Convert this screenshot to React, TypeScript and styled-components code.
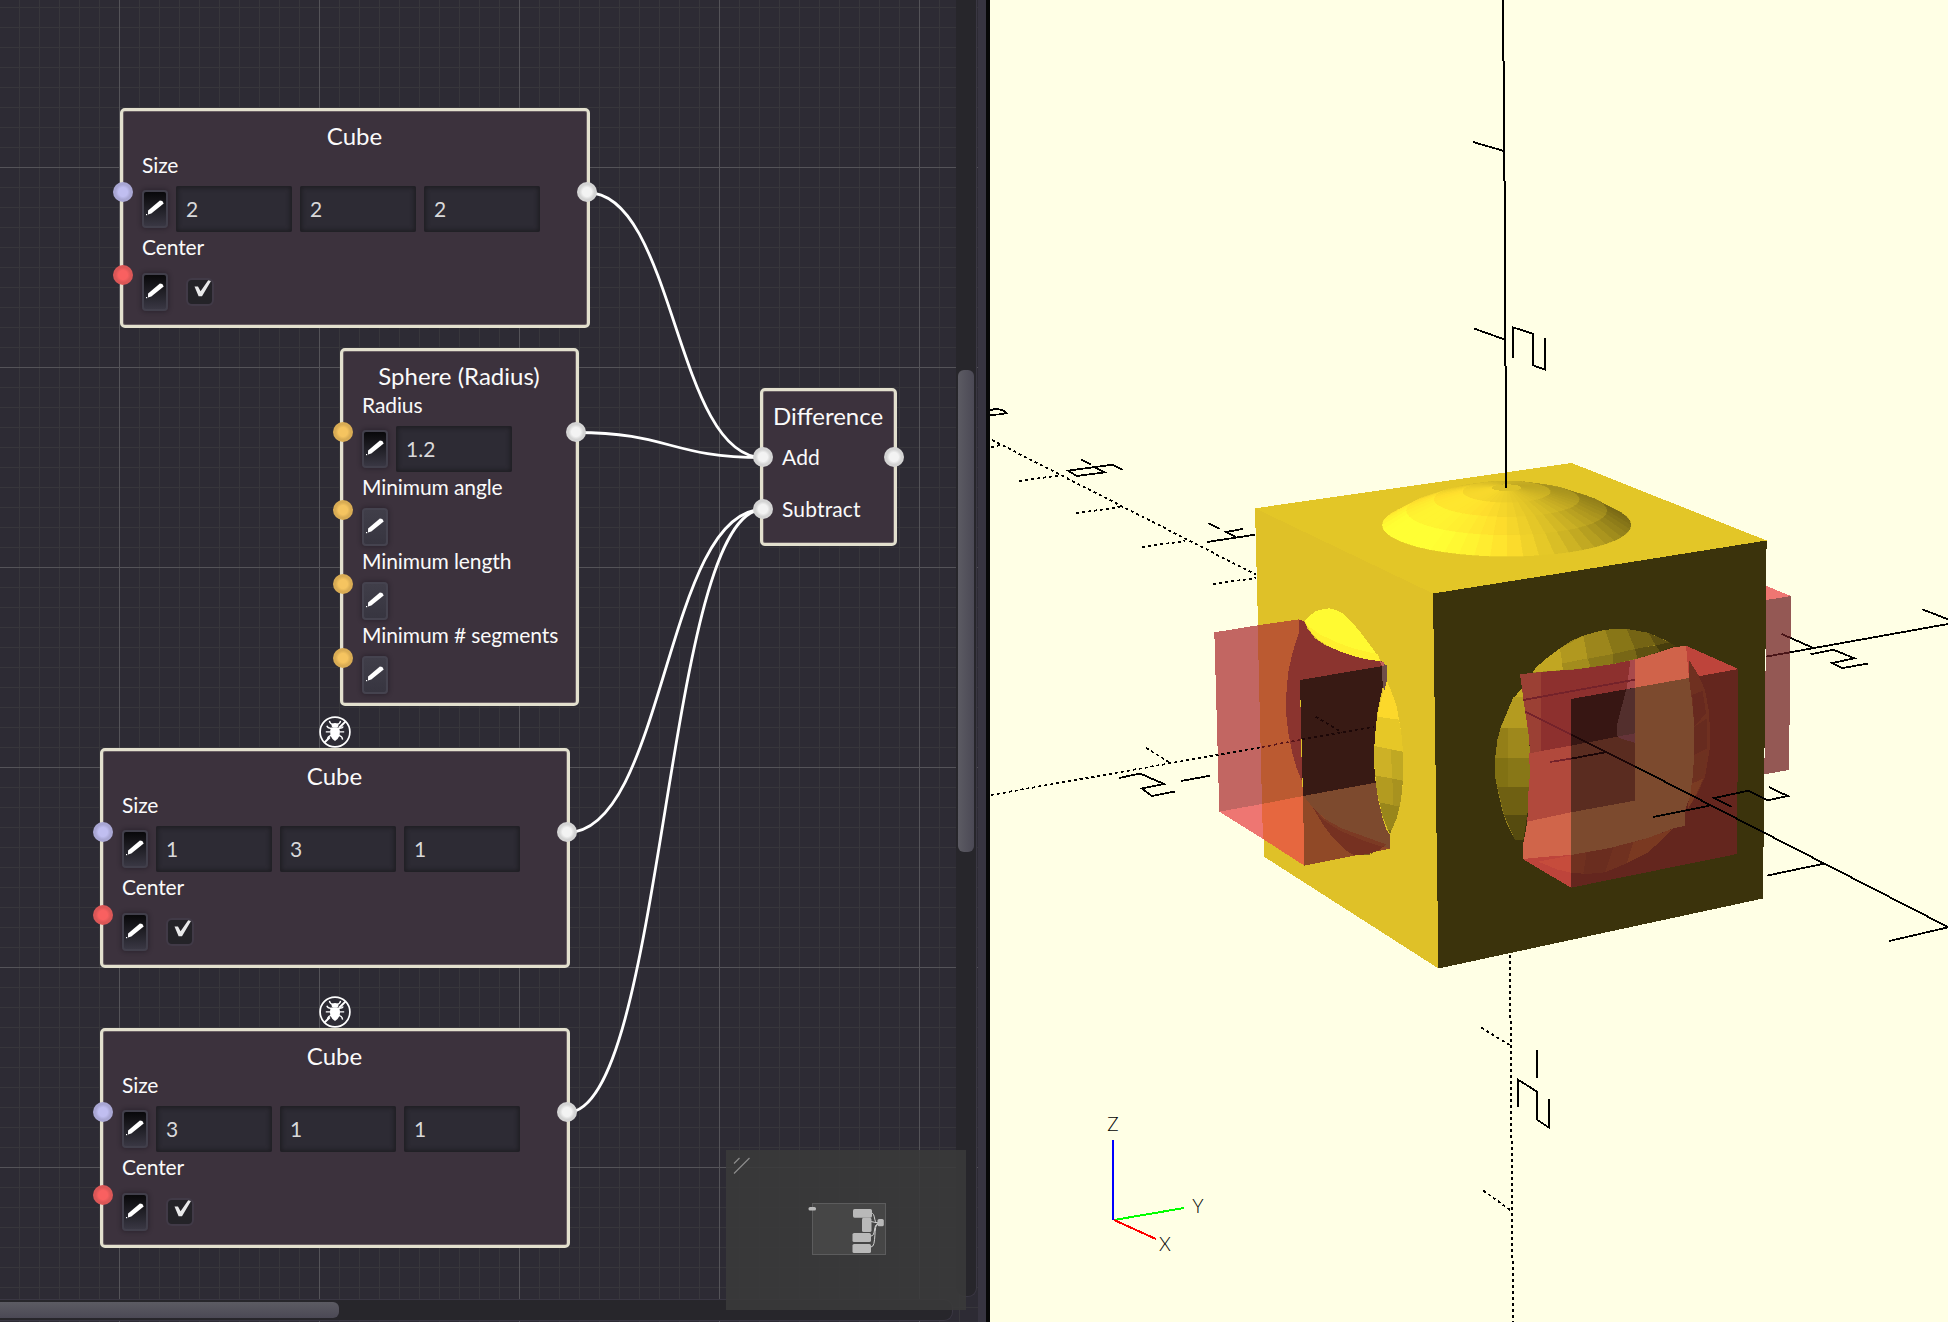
import React from 'react';
import styled, { createGlobalStyle } from 'styled-components';

const GlobalStyle = createGlobalStyle`
  html, body { margin: 0; padding: 0; background: #2d2b34; overflow: hidden; }
  *, *::before, *::after { box-sizing: border-box; }
`;

const Window = styled.div`
  display: flex;
  width: 1948px;
  height: 1322px;
  overflow: hidden;
  font-family: Lato, 'Open Sans', sans-serif;
`;

const GraphPanel = styled.section`
  position: relative;
  flex: 0 0 978px;
  overflow: hidden;
  background-color: #2d2b34;
  background-image:
    linear-gradient(to right, #545358 1px, transparent 1px),
    linear-gradient(to bottom, #545358 1px, transparent 1px),
    linear-gradient(to right, #37363b 1px, transparent 1px),
    linear-gradient(to bottom, #37363b 1px, transparent 1px);
  background-size: 200px 200px, 200px 200px, 20px 20px, 20px 20px;
  background-position: 119px 0, 0 167px, 19px 0, 0 7px;
`;

const Splitter = styled.div`
  flex: 0 0 12px;
  background: #373440;
  border-right: 4px solid #070707;
`;

const Viewport = styled.section`
  flex: 1;
  background: #ffffe5;
`;

const Scene = styled.svg`
  display: block;
  width: 958px;
  height: 1322px;
`;

const Wires = styled.svg`
  position: absolute;
  inset: 0;
  width: 978px;
  height: 1322px;
`;

/* ---------- graph nodes ---------- */

const NodeBox = styled.article<{ $x: number; $y: number; $w: number }>`
  position: absolute;
  left: ${(p) => p.$x}px;
  top: ${(p) => p.$y}px;
  width: ${(p) => p.$w}px;
  padding-bottom: 9px;
  border: 3px solid #e3e0ce;
  border-radius: 5px;
  background: #3c323d;
  box-shadow: inset 0 0 0 1px #6a5f65;
  color: #fafafa;
`;

const Title = styled.h2`
  margin: 0;
  height: 39px;
  padding: 10px 1px 0 0;
  font-size: 24px;
  font-weight: 400;
  line-height: 29px;
  text-align: center;
  white-space: nowrap;
`;

const Row = styled.div`
  position: relative;
  padding-left: 19px;
`;

const Label = styled.div`
  height: 36px;
  line-height: 29px;
  font-size: 21px;
  letter-spacing: -0.1px;
  white-space: nowrap;
`;

const SlotLabel = styled.div`
  line-height: 53px;
  height: 52px;
  font-size: 21px;
  letter-spacing: 0.15px;
`;

const Controls = styled.div<{ $h: number }>`
  display: flex;
  align-items: center;
  gap: 8px;
  height: ${(p) => p.$h}px;
`;

const portColors = {
  vector: ['#c0bef0', '#a9a7d4'],
  bool: ['#f96060', '#db5757'],
  number: ['#f5c460', '#d9ac54'],
  solid: ['#f3f3f3', '#d4d4d4'],
};
type PortKind = keyof typeof portColors;

const Port = styled.span<{ $kind: PortKind; $side: 'left' | 'right' }>`
  position: absolute;
  top: 50%;
  ${(p) => p.$side}: -10px;
  width: 20px;
  height: 20px;
  margin-top: -9px;
  border-radius: 50%;
  background: radial-gradient(
    circle closest-side,
    ${(p) => portColors[p.$kind][0]} 45%,
    ${(p) => portColors[p.$kind][1]} 75%
  );
  z-index: 2;
`;

const EditButton = styled.button<{ $on: boolean }>`
  display: flex;
  width: 26px;
  height: 38px;
  padding: 0;
  border: 2px solid ${(p) => (p.$on ? '#413f4b' : '#45434f')};
  border-radius: 4px;
  background: ${(p) => (p.$on ? 'linear-gradient(#08080a, #393743)' : 'linear-gradient(#403e49, #373540)')};
  box-shadow: 0 0 4px 1px rgba(24, 20, 28, 0.45);
`;

const Field = styled.div`
  width: 116px;
  height: 46px;
  padding-left: 10px;
  border-radius: 2px;
  background: #2d2b34;
  box-shadow: inset 0 0 4px 2px #1f1e23;
  color: #d9d9da;
  font-size: 21px;
  line-height: 45px;
`;

const Check = styled.div`
  display: flex;
  width: 24px;
  height: 24px;
  margin-left: 12px;
  border-radius: 4px;
  background: #242328;
  box-shadow: 0 0 0 2px #413a47;
`;

const Glyph = styled.svg`
  display: block;
  flex: none;
  overflow: visible;
`;

const BugBadge = styled.div<{ $x: number; $y: number }>`
  position: absolute;
  left: ${(p) => p.$x}px;
  top: ${(p) => p.$y}px;
`;

const Edit = ({ on = false }: { on?: boolean }) => (
  <EditButton $on={on}>
    <Glyph width="22" height="34" viewBox="2 2 22 34">
      <path d="M6.4 19.6 18.2 9.4 20.6 10 22 12.6 9.6 22.4 6.3 23.4Z" fill="#fff" transform="translate(-.3 1)" />
      <rect x="4" y="24" width="1.2" height="1.2" fill="#fff" />
    </Glyph>
  </EditButton>
);

const Checkbox = () => (
  <Check>
    <Glyph width="24" height="24" viewBox="0 0 24 24">
      <path d="M6.5 6.5H10L12.6 11.2 20.2.2 23 1 14 16.2H10.6Z" fill="#e9e9ea" />
    </Glyph>
  </Check>
);

const Bug = ({ x, y }: { x: number; y: number }) => (
  <BugBadge $x={x} $y={y}>
    <Glyph width="32" height="32" viewBox="0 0 32 32" fill="none" stroke="#fff">
      <circle cx="16" cy="16" r="14.9" strokeWidth="1.7" fill="#2d2b34" />
      <path d="M26.4 5.6 20.2 11.8M10.8 21.2 5.4 26.6" strokeWidth="2" />
      <path
        d="M10.4 4.8Q11 8 14 8.4M21.6 4.8Q21 8 18 8.4M12 12.4Q8.6 12.4 7.8 9.8M11.6 15.8H6.8M12 19.4Q8.6 20.4 8.4 23.6M20 12.4Q23.4 12.4 24.2 10.6M20.4 15.8H25.2M20 19.4Q23.4 20.4 23.6 23.6"
        strokeWidth="1.3"
      />
      <ellipse cx="16" cy="9.4" rx="3.4" ry="2.4" fill="#fff" stroke="none" />
      <path d="M12 11.6H20Q21.6 15 20.6 19.6 19 23.6 16 25 13 23.6 11.4 19.6 10.4 15 12 11.6Z" fill="#fff" stroke="none" />
    </Glyph>
  </BugBadge>
);

const CubeNode = ({ x, y, size }: { x: number; y: number; size: string[] }) => (
  <NodeBox $x={x} $y={y} $w={470}>
    <Title>Cube</Title>
    <Row>
      <Port $kind="vector" $side="left" />
      <Port $kind="solid" $side="right" />
      <Label>Size</Label>
      <Controls $h={46}>
        <Edit on />
        {size.map((v, i) => (
          <Field key={i}>{v}</Field>
        ))}
      </Controls>
    </Row>
    <Row>
      <Port $kind="bool" $side="left" />
      <Label>Center</Label>
      <Controls $h={48}>
        <Edit on />
        <Checkbox />
      </Controls>
    </Row>
  </NodeBox>
);

const SphereNode = ({ x, y }: { x: number; y: number }) => (
  <NodeBox $x={x} $y={y} $w={239}>
    <Title>Sphere (Radius)</Title>
    <Row>
      <Port $kind="number" $side="left" />
      <Port $kind="solid" $side="right" />
      <Label>Radius</Label>
      <Controls $h={46}>
        <Edit on />
        <Field>1.2</Field>
      </Controls>
    </Row>
    {['Minimum angle', 'Minimum length', 'Minimum # segments'].map((t) => (
      <Row key={t}>
        <Port $kind="number" $side="left" />
        <Label>{t}</Label>
        <Controls $h={38}>
          <Edit />
        </Controls>
      </Row>
    ))}
  </NodeBox>
);

const DifferenceNode = ({ x, y }: { x: number; y: number }) => (
  <NodeBox $x={x} $y={y} $w={137}>
    <Title>Difference</Title>
    <Row>
      <Port $kind="solid" $side="left" />
      <Port $kind="solid" $side="right" />
      <SlotLabel>Add</SlotLabel>
    </Row>
    <Row>
      <Port $kind="solid" $side="left" />
      <SlotLabel>Subtract</SlotLabel>
    </Row>
  </NodeBox>
);

const wires = [
  [587, 192.5, 763, 457.5],
  [576, 432.5, 763, 457.5],
  [567, 832.5, 763, 509.5],
  [567, 1112.5, 763, 509.5],
];

/* ---------- scroll bars and minimap ---------- */

const Track = styled.div<{ $vertical?: boolean }>`
  position: absolute;
  background: #27262b;
  border: 0 solid #3a3743;
  ${(p) =>
    p.$vertical
      ? 'left: 956px; top: -10px; width: 21px; height: 1307px; border-width: 0 1px 1px 0; border-radius: 0 0 9px 9px;'
      : 'left: -10px; top: 1299px; width: 963px; height: 22px; border-width: 1px 1px 1px 0; border-radius: 0 9px 9px 0;'}
`;

const Grabber = styled.div<{ $vertical?: boolean }>`
  position: absolute;
  border-radius: 6px;
  ${(p) =>
    p.$vertical
      ? 'left: 2px; top: 380px; width: 16px; height: 482px; background: linear-gradient(to right, #5c5b63, #4b4955);'
      : 'left: 0; top: 2px; width: 349px; height: 16px; background: linear-gradient(#5c5b63, #4b4955);'}
`;

const Minimap = styled.div`
  position: absolute;
  left: 726px;
  top: 1150px;
  width: 240px;
  height: 160px;
  background: rgba(58, 58, 58, 0.88);
`;

const MapNodes: number[][] = [
  [82.5, 57, 7.5, 3.5],
  [127, 59, 19, 8.7],
  [136, 67.8, 9.5, 14.3],
  [126.5, 83, 18.5, 9],
  [126.5, 94, 18.5, 9],
  [151.5, 69, 6.3, 7.3],
];

/* ---------- 3D view ---------- */

const shade = (b: number) =>
  `rgb(${Math.min(255, Math.round(227 * b))},${Math.min(255, Math.round(198 * b))},${Math.round(40 * b)})`;

// Latitude rings of the sphere cap: centre y, radii, light swing.
const rings = [
  { cy: 533, rx: 44, ry: 10, amp: 0.06 },
  { cy: 545, rx: 131, ry: 32, amp: 0.12 },
  { cy: 568, rx: 218, ry: 52, amp: 0.21 },
  { cy: 602, rx: 301, ry: 73, amp: 0.3 },
  { cy: 645, rx: 373, ry: 94, amp: 0.4 },
];
const SEG = 48;

const Dome = () => {
  const facets: React.ReactNode[] = [];
  for (let k = rings.length - 1; k > 0; k--) {
    const o = rings[k];
    const n = rings[k - 1];
    const order = Array.from({ length: SEG }, (_, i) => i).sort(
      (a, b) => Math.sin(((a + 0.5) / SEG) * 2 * Math.PI) - Math.sin(((b + 0.5) / SEG) * 2 * Math.PI),
    );
    for (const i of order) {
      const a = (i / SEG) * 2 * Math.PI;
      const b = ((i + 1) / SEG) * 2 * Math.PI;
      const pt = (r: typeof o, t: number) => `${(410 + r.rx * Math.cos(t)).toFixed(1)},${(r.cy + r.ry * Math.sin(t)).toFixed(1)}`;
      const light = 1 - o.amp * 0.22 + o.amp * Math.cos((a + b) / 2 - 2.57);
      facets.push(
        <polygon key={`${k}-${i}`} points={`${pt(o, a)} ${pt(o, b)} ${pt(n, b)} ${pt(n, a)}`} fill={shade(light)} stroke={shade(light)} />,
      );
    }
  }
  return (
    <g transform="translate(1370 310) scale(.33333)">
      {facets}
      <ellipse cx="410" cy="533" rx="44" ry="10" fill={shade(0.98)} />
    </g>
  );
};

const P = ({ d, f }: { d: string; f: string }) => <polygon points={d} fill={f} />;

const LeftHole = () => (
  <g transform="translate(1200 600) scale(.33333)">
    <P d="43,97 173,76 186,612 58,635" f="#c26662" />
    <P d="58,635 186,612 189,717" f="#ee7672" />
    <P d="173,76 297,58 297,97 300,400 306,545 310,588 186,612" f="#bb5a31" />
    <P d="186,612 310,588 313,797 189,717" f="#e6673f" />
    <P d="297,58 313,65 322,85 345,115 375,135 410,150 460,168 545,184 549,198 300,240 306,545 290,505 276,455 265,400 258,335 260,260 266,210 277,160 297,97" f="#8b342f" />
    <P d="314,64 325,50 345,35 362,29 388,25 405,29 425,38 450,60 480,95 505,128 525,155 541,184 500,178 460,168 420,154 385,139 350,116 328,90" f="#fffa32" />
    <P d="314,64 330,82 360,103 410,127 460,145 534,163 541,184 500,178 460,168 420,154 385,139 350,116 328,90" f="#fff02e" />
    <P d="560,240 569,262 580,290 590,320 597,358 604,400 609,455 609,545 603,600 598,625 590,655 570,702 560,680 545,640 537,605 530,570 526,530 522,500 522,450 527,390 534,340 550,270" f="#fcd82b" />
    <P d="530,350 597,359 604,400 609,455 522,438 526,390" f="#e6c727" />
    <P d="522,438 609,455 609,542 526,526 522,490" f="#cdb126" />
    <P d="573,449 609,455 609,542 576,536" f="#c0a823" />
    <P d="526,526 609,542 603,600 599,620 538,607 530,570" f="#b39b20" />
    <P d="577,536 609,542 603,600 599,620 580,616" f="#a8921f" />
    <P d="538,607 599,620 590,655 574,692 563,688 548,650" f="#99861b" />
    <P d="563,688 574,692 570,702" f="#7a6a17" />
    <P d="300,240 549,198 552,245 542,290 532,340 526,400 522,450 523,500 527,550 309,590" f="#381a14" />
    <P d="546,190 561,196 561,240 552,275 547,240" f="#704e49" />
    <P d="540,184 553,188 553,197 546,198" f="#c0605c" />
    <P d="309,588 527,548 535,600 548,655 560,690 570,704 570,746 313,797" f="#904927" />
    <P d="311,588 527,548 535,600 548,655 560,690 570,704 570,745 500,722 430,693 380,660 340,625" f="#7d4a2e" />
    <P d="340,625 370,655 420,688 500,721 553,738 535,752 500,764 460,764 435,750 400,715 370,675" f="#763121" />
    <P d="345,632 375,657 425,685 500,712 560,734 545,740 490,722 420,692 370,660" f="#7c3a24" />
    <P d="472,766 518,760 505,766" f="#7a5f20" />
  </g>
);

const FrontHole = () => (
  <g transform="translate(1460 580) scale(.33333)">
    <P d="919,18 993,48 919,60" f="#ee7672" />
    <P d="919,60 993,48 987,570 913,583" f="#945854" />
    {/* sphere shell seen through the opening */}
    <P d="465,147 500,147 565,158 625,185 645,197 600,215 525,238 460,252 350,268 240,277 180,283 200,360 210,520 205,640 190,780 165,780 142,735 127,690 115,640 106,595 106,530 112,480 123,440 140,400 160,355 185,325 218,277 260,235 300,205 335,182 370,167 430,150" f="#9c861c" />
    <P d="218,277 228,262 260,235 300,205 307,250 308,270" f="#c1a622" />
    <P d="300,205 370,167 383,235 307,250" f="#b1981f" />
    <P d="370,167 435,149 460,222 383,236" f="#9c861c" />
    <P d="435,149 500,147 525,207 460,222" f="#887617" />
    <P d="500,147 565,158 588,195 525,207" f="#756414" />
    <P d="565,158 628,187 588,198" f="#5f5111" />
    <P d="307,250 383,236 392,262 308,270" f="#a38c1d" />
    <P d="383,236 460,222 458,252 392,262" f="#8b7819" />
    <P d="460,222 525,207 532,236 458,252" f="#786716" />
    <P d="525,207 588,196 600,215 532,236" f="#5f5111" />
    <P d="588,196 628,187 645,197 600,215" f="#473d0c" />
    <P d="185,325 190,350 160,355" f="#c5a923" />
    <P d="160,352 192,352 202,443 123,443 140,400" f="#b49b20" />
    <P d="123,443 204,443 210,533 106,533" f="#9e881c" />
    <P d="106,533 212,533 209,621 112,621 106,595" f="#887717" />
    <P d="112,621 209,621 202,705 132,705" f="#6f6012" />
    <P d="132,705 202,705 190,780 165,780" f="#564b0f" />
    <P d="112,480 123,443 145,443 145,621 112,621 106,595 106,530" f="rgba(90,80,0,.14)" />
    {/* ghosted cube */}
    <P d="333,357 835,267 831,822 333,923" f="#64261e" />
    <P d="678,197 835,267 687,294" f="#be443b" />
    <P d="180,283 240,276 350,268 460,252 527,238 527,323 333,357 333,497 210,520 207,470 195,390" f="#8d302e" />
    <P d="180,283 243,276 243,514 210,520 207,470 195,390" f="#9b4034" />
    <P d="511,241 525,238 525,323 500,328" f="#a9494b" />
    <P d="333,357 525,323 525,460 333,497" f="#371613" />
    <P d="499,328 525,323 525,488 495,480 470,468 472,430 485,380" f="#532f2d" />
    <P d="333,497 525,460 525,662 333,697" f="#5a2c20" />
    <P d="470,470 525,460 525,488 495,480" f="#653439" />
    <P d="207,520 333,497 333,697 202,725 205,640 210,580" f="#b1493c" />
    <P d="202,725 333,697 333,825 260,830 188,837 190,790" f="#d0654a" />
    <P d="188,837 260,830 333,825 333,923" f="#be443b" />
    <P d="235,845 333,826 333,878 290,868" f="#c64c3c" />
    <P d="687,240 715,285 735,330 748,400 750,500 735,590 710,645 682,690 690,650 703,520 703,440 697,370 687,294" f="#6f3020" />
    <P d="697,345 728,332 738,400 703,440" f="#67291f" />
    <P d="703,440 742,415 742,505 703,525" f="#672b1f" />
    <P d="703,530 742,512 732,585 696,608" f="#6d3120" />
    <P d="694,612 730,595 710,640 682,690" f="#7a3b22" />
    <P d="525,238 570,225 640,202 678,197 687,294 525,323" f="#d0634a" />
    <P d="525,323 687,294 697,370 703,440 703,520 698,590 690,650 675,690 675,738 640,745 560,775 450,804 333,825 333,697 525,662" f="#7c4a2e" />
    <P d="333,825 450,804 560,775 640,746 600,785 560,820 500,850 435,877 380,882 333,878" f="#703120" />
    <P d="380,817 460,802 435,877 380,882 370,880" f="#6a2d1f" />
    <P d="520,787 560,775 640,746 600,785 560,820 500,850" f="#7a3921" />
  </g>
);

const Lines = ({ children, at = '0 0', color = '#000' }: { children: React.ReactNode; at?: string; color?: string }) => (
  <g transform={`translate(${at}) scale(.33333)`} fill="none" stroke={color} strokeWidth="5.4">
    {children}
  </g>
);

const DOT = '9 9';

const ModelView = () => (
  <Scene viewBox="990 0 958 1322" shapeRendering="crispEdges">
    <rect x="990" width="958" height="1322" fill="#ffffe5" />
    <P d="1255,508.3 1571.7,463 1766.6,540.5 1433,593.5" f="#e3c627" />
    <P d="1255,508.3 1433,593.5 1438.5,968.5 1264,856.7" f="#dfc128" />
    <P d="1433,593.5 1766.6,540.5 1763,898.5 1438.5,968.5" f="#3b330c" />
    <Dome />
    <LeftHole />
    <FrontHole />

    {/* vertical axis */}
    <g fill="none" stroke="#000" strokeWidth="2">
      <path d="M1503 0 1504 120 1505 240 1506 488" />
      <path d="M1473 142 1504 151" strokeWidth="1.8" />
      <path d="M1510 955 1513 1322" strokeDasharray="3 3" />
    </g>
    <Lines at="1370 310">
      <path d="M313 56 403 88M429 143V52L488 71 489 166 526 179 525 85" />
    </Lines>
    <Lines at="1080 1000">
      <path d="M1204 83 1290 136M1210 572 1292 631" strokeDasharray={DOT} />
      <path d="M1314 320V239L1371 275V359L1407 383V298M1371 151V233" />
    </Lines>

    {/* far half of the X axis */}
    <Lines at="980 380">
      <path d="M30 91Q45 85 60 89 76 93 79 99L60 103 30 105" />
      <path d="M36 180 240 284 828 584M33 202 60 195M117 303 240 286M288 400 420 381M486 501 615 483M699 612 828 594" strokeDasharray={DOT} />
      <path d="M303 239 333 254M428 270 398 254 264 272 290 288 375 277 345 262M685 429 719 447M788 447 738 456 768 471M681 486 826 464" />
    </Lines>

    {/* Y axis, left half */}
    <g fill="none" stroke="#000" strokeWidth="1.8">
      <path d="M991 795 1262 747" strokeDasharray="3 3" />
      <path d="M1146 748 1169 762" strokeDasharray="3 3" />
      <path d="M1181 781 1210 775.7M1119 778 1140 773.5 1164 784 1142 788.5 1152 796 1175 791.5" />
    </g>
    <Lines at="1200 600" color="#5a1519">
      <path d="M186 441 300 420" strokeDasharray={DOT} />
    </Lines>
    <Lines at="1200 600" color="#1c0707">
      <path d="M306 418 522 380M347 350 425 397" strokeDasharray={DOT} />
    </Lines>

    {/* Y axis, right half */}
    <Lines at="1640 560">
      <path d="M450 277 924 192M452 234 520 264M847 148 924 178M512 283 580 269 643 295 576 309 607 324 683 311" />
      <path d="M378 290 450 277M425 222 452 234" stroke="#4a1518" />
    </Lines>

    {/* near half of the X axis */}
    <Lines at="1460 580">
      <path d="M190 360 525 299M196 395 333 463M270 546 333 536" stroke="#74222a" />
      <path d="M333 463 525 559M333 536 435 517" stroke="#1b0607" />
      <path d="M525 559 920 762 1464 1041M580 711 748 677M815 681 763 654 866 632 922 661 983 648 927 621" />
    </Lines>
    <Lines at="1640 560">
      <path d="M380 947 552 911M748 1143 924 1102" />
    </Lines>

    {/* orientation gizmo */}
    <g fill="none" strokeWidth="2">
      <path d="M1114 1220 1184 1208" stroke="#0f0" />
      <path d="M1114 1220 1156 1239" stroke="#f00" />
      <path d="M1113 1140V1220" stroke="#00f" />
    </g>
    <g fill="#000" fontFamily="Lato, 'Liberation Sans', sans-serif" fontWeight="300" fontSize="19" textAnchor="middle">
      <text x="1113" y="1131">Z</text>
      <text x="1198" y="1213">Y</text>
      <text x="1165" y="1251">X</text>
    </g>
  </Scene>
);

export default function App() {
  return (
    <Window>
      <GlobalStyle />
      <GraphPanel>
        <Wires viewBox="0 0 978 1322" fill="none" stroke="#fff" strokeWidth="2.8">
          {wires.map(([x1, y1, x2, y2]) => {
            const m = (x1 + x2) / 2;
            return <path key={y1} d={`M${x1} ${y1}C${m} ${y1} ${m} ${y2} ${x2} ${y2}`} />;
          })}
        </Wires>
        <CubeNode x={120} y={108} size={['2', '2', '2']} />
        <SphereNode x={340} y={348} />
        <CubeNode x={100} y={748} size={['1', '3', '1']} />
        <CubeNode x={100} y={1028} size={['3', '1', '1']} />
        <DifferenceNode x={760} y={388} />
        <Bug x={319} y={716} />
        <Bug x={319} y={996} />
        <Track $vertical>
          <Grabber $vertical />
        </Track>
        <Track>
          <Grabber />
        </Track>
        <Minimap>
          <Glyph width="240" height="160" viewBox="0 0 240 160">
            <path d="M8 23.5 23.5 8M8 13.5 13.5 8" stroke="#8a8a8a" strokeWidth="1.3" />
            <rect x="86.5" y="53.5" width="73" height="51" fill="rgba(255,255,255,.07)" stroke="#5c5c5d" />
            <path d="M145 63C150 63 147 73 152 73M145 71.5 152 73M145 86C150 86 147 74 152 74M145 97C151 97 147 74 152 74" fill="none" stroke="#d0d0d0" />
            {MapNodes.map(([x, y, w, h]) => (
              <rect key={`${x}-${y}`} x={x} y={y} width={w} height={h} rx="1.6" fill="#b9b9b9" />
            ))}
          </Glyph>
        </Minimap>
      </GraphPanel>
      <Splitter />
      <Viewport>
        <ModelView />
      </Viewport>
    </Window>
  );
}
